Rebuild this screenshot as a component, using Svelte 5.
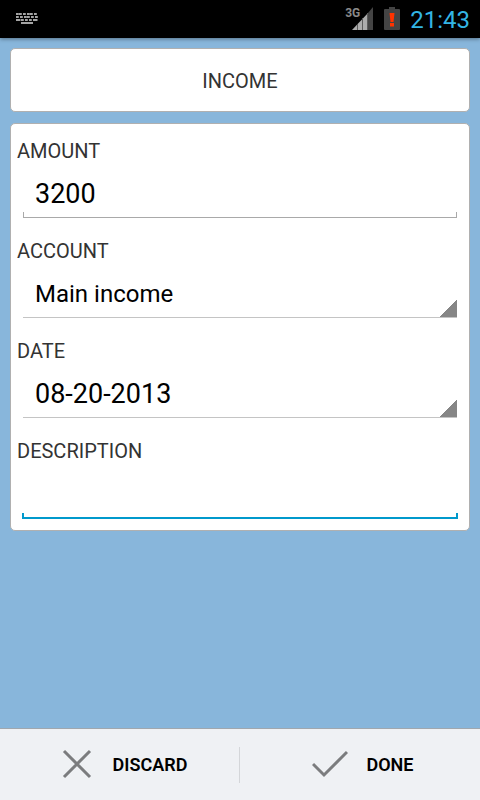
<script lang="ts">
	let amount = $state('3200');
	let account = $state('Main income');
	let date = $state('08-20-2013');
	let description = $state('');

	const accounts = ['Main income', 'Savings', 'Cash'];

	// x positions of the keys in each row of the keyboard indicator
	const keyRows = [
		[0, 3, 7, 11, 14, 18],
		[0, 4, 8, 11, 15, 19],
		[0, 5, 9, 13, 17]
	];
</script>

<div class="screen">
	<header class="status">
		<svg class="keyboard" width="22" height="12" viewBox="0 0 22 12" fill="#a4a4a4" aria-hidden="true">
			{#each keyRows as row, i}
				{#each row as x}
					<rect {x} y={i * 3} width={i === 2 && (x === 0 || x === 17) ? 4.5 : 2.8} height="2" />
				{/each}
			{/each}
			<rect x="5" y="9" width="12" height="2" />
		</svg>
		<div class="indicators">
			<div class="network">
				<span>3G</span>
				<svg width="22" height="24" viewBox="0 0 22 24" aria-hidden="true">
					<path d="M0 23L16 6V23Z" fill="#acacac" />
					<path d="M16 6L21 0V23H16Z" fill="#444" />
					<path d="M5.500 17V23M10.500 11V23M15.500 6V23" stroke="#5c5c5c" />
				</svg>
			</div>
			<svg class="battery" width="16" height="24" viewBox="0 0 16 24" aria-hidden="true">
				<path d="M5 0H11V2H15Q16 2 16 3V22Q16 23 15 23H1Q0 23 0 22V3Q0 2 1 2H5Z" fill="#444" />
				<path d="M5.500 6H10.500L9.500 15H6.500ZM6 16H10V19.500H6Z" fill="#ff3300" />
			</svg>
			<time>21:43</time>
		</div>
	</header>

	<main>
		<h1 class="card">INCOME</h1>

		<form class="card" id="entry">
			<div class="row">
				<label for="amount">AMOUNT</label>
				<input id="amount" class="text" inputmode="decimal" bind:value={amount} />
			</div>
			<div class="row">
				<label for="account">ACCOUNT</label>
				<select id="account" class="spinner" bind:value={account}>
					{#each accounts as name}
						<option>{name}</option>
					{/each}
				</select>
			</div>
			<div class="row">
				<label for="date">DATE</label>
				<button id="date" class="spinner date" type="button" aria-haspopup="dialog">{date}</button>
			</div>
			<div class="row">
				<label for="description">DESCRIPTION</label>
				<input id="description" class="text active" bind:value={description} />
			</div>
		</form>
	</main>

	<footer>
		<button type="button">
			<svg width="36" height="32" viewBox="0 0 36 32" aria-hidden="true">
				<path d="M5 2L31 28M31 2L5 28" />
			</svg>
			DISCARD
		</button>
		<button type="submit" form="entry">
			<svg width="36" height="32" viewBox="0 0 36 32" aria-hidden="true">
				<path d="M1 15L12 26L35 3" />
			</svg>
			DONE
		</button>
	</footer>
</div>

<style>
	:global(body) {
		margin: 0;
		background: #88b6db;
	}

	.screen {
		display: flex;
		flex-direction: column;
		min-height: 100vh;
		font-family: Roboto, sans-serif;
		color: #000;
		background: #88b6db;
	}

	.status {
		display: flex;
		align-items: center;
		justify-content: space-between;
		box-sizing: border-box;
		height: 38px;
		padding: 0 10px 0 16px;
		background: #000;
		box-shadow: 0 1px 4px rgba(0, 0, 0, 0.4);
	}

	.indicators {
		display: flex;
		align-items: center;
		gap: 10px;
	}

	.network {
		display: flex;
		align-items: flex-start;
	}

	.network span {
		margin-right: -8px;
		font-size: 12px;
		font-weight: 700;
		line-height: 12px;
		color: #8a8a8a;
	}

	.indicators svg {
		display: block;
	}

	time {
		padding-top: 2px;
		font-size: 24px;
		line-height: 36px;
		color: #33b5e5;
	}

	main {
		display: flex;
		flex: 1;
		flex-direction: column;
		gap: 11px;
		padding: 10px;
	}

	.card {
		margin: 0;
		border: 1px solid #b0b0b0;
		border-radius: 5px;
		background: #fff;
	}

	h1 {
		padding-top: 2px;
		font-size: 20px;
		font-weight: 400;
		line-height: 60px;
		text-align: center;
		color: #333;
	}

	form {
		display: flex;
		flex-direction: column;
		gap: 21px;
		padding: 15px 6px 11px;
	}

	.row {
		display: flex;
		flex-direction: column;
	}

	label {
		font-size: 20px;
		line-height: 24px;
		color: #333;
	}

	.text,
	.spinner {
		box-sizing: border-box;
		height: 55px;
		margin: 0 6px;
		padding: 7px 12px 0;
		border: 0;
		border-radius: 0;
		outline: 0;
		font-family: inherit;
		font-size: 27px;
		text-align: left;
		color: #000;
		appearance: none;
	}

	/* underline with a short tick at each end */
	.text {
		--line: #a9a9a9;
		--weight: 1px;
		background:
			linear-gradient(var(--line), var(--line)) bottom / 100% var(--weight) no-repeat,
			linear-gradient(var(--line), var(--line)) bottom left / var(--weight) 6px no-repeat,
			linear-gradient(var(--line), var(--line)) bottom right / var(--weight) 6px no-repeat;
	}

	.text.active {
		--line: #0099cc;
		--weight: 2px;
		height: 56px;
		margin: 0 5px;
	}

	.spinner {
		font-size: 24px;
		background:
			linear-gradient(135deg, transparent 50%, #868686 50%) right 0 bottom 1px / 18px 18px no-repeat,
			linear-gradient(#c4c4c4, #c4c4c4) bottom / 100% 1px no-repeat;
	}

	.spinner.date {
		font-size: 27px;
	}

	footer {
		display: flex;
		border-top: 1px solid #a0a7ae;
		background: #eff1f4;
	}

	footer button {
		display: flex;
		flex: 1;
		align-items: center;
		justify-content: center;
		gap: 18px;
		height: 71px;
		padding: 0 0 0 6px;
		border: 0;
		font-family: inherit;
		font-size: 18px;
		font-weight: 600;
		color: #000;
		background: none;
	}

	footer button:first-child {
		background: linear-gradient(#d4d6d9, #d4d6d9) right / 1px 36px no-repeat;
	}

	footer svg {
		fill: none;
		stroke: #7b7c7e;
		stroke-width: 3;
	}
</style>
